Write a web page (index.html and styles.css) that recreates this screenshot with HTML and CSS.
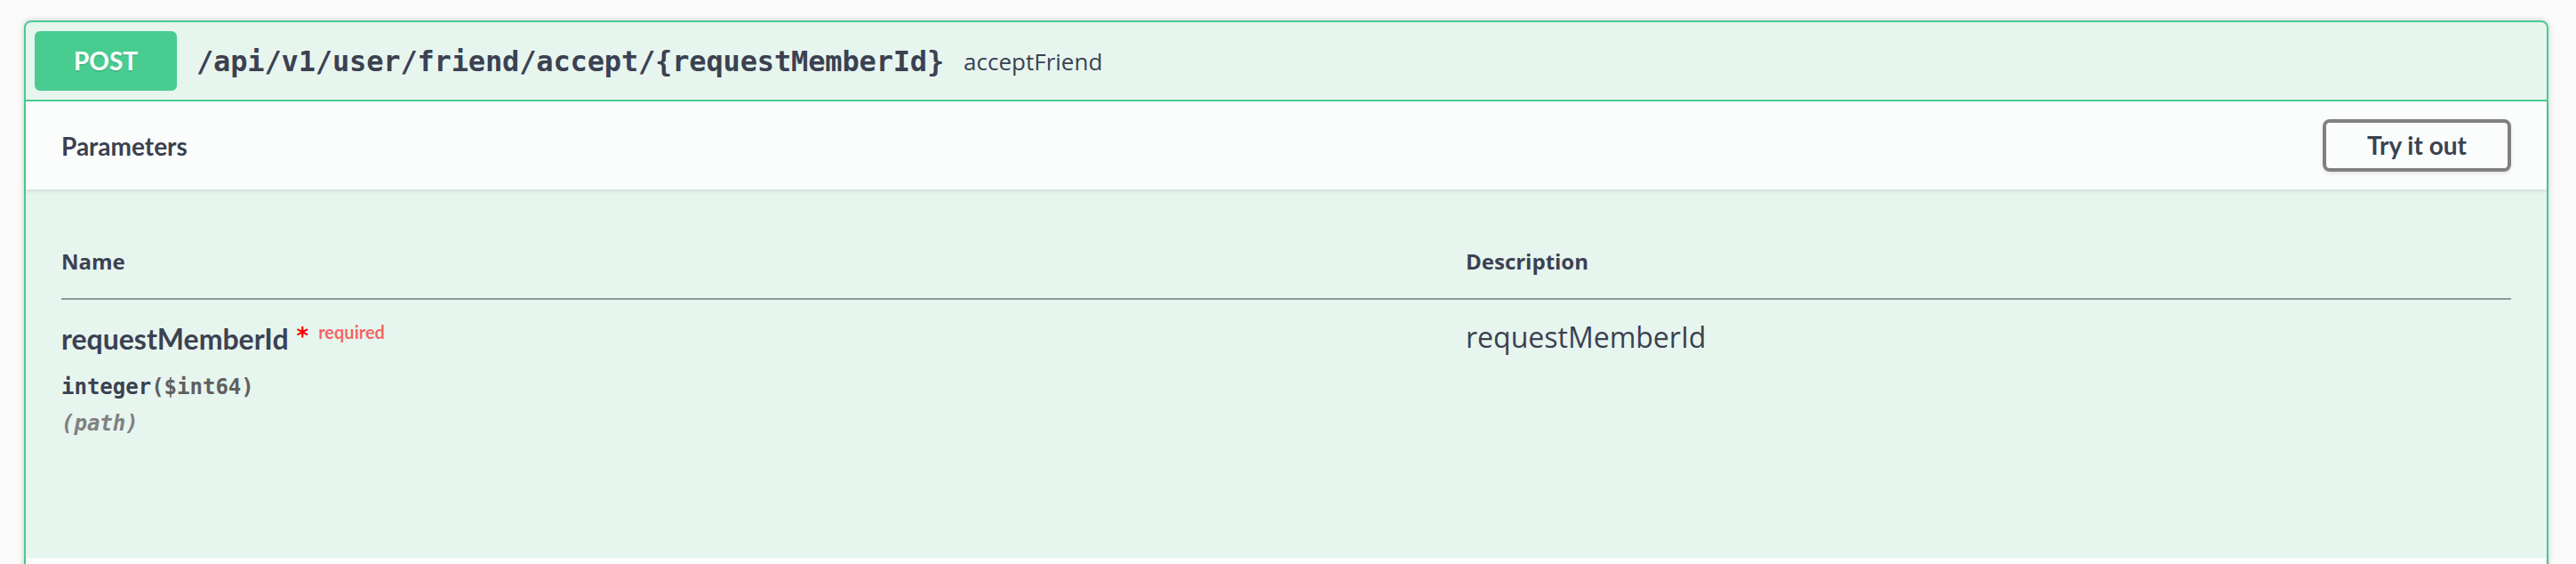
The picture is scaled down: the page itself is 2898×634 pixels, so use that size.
FILE: index.html
```html
<!DOCTYPE html>
<html lang="en">
<head>
<meta charset="utf-8">
<title>POST /api/v1/user/friend/accept/{requestMemberId}</title>
<link rel="stylesheet" href="styles.css">
</head>
<body>
<div class="page">
  <div class="opblock">
    <div class="summary">
      <span class="method">POST</span>
      <span class="path">/api/v1/user/friend/accept/{requestMemberId}</span>
      <span class="summary-desc">acceptFriend</span>
    </div>
    <div class="section-header">
      <h4 class="section-title">Parameters</h4>
      <button class="try-out">Try it out</button>
    </div>
    <div class="table-container">
      <table class="parameters">
        <thead>
          <tr>
            <th class="col-name">Name</th>
            <th class="col-desc">Description</th>
          </tr>
        </thead>
        <tbody>
          <tr>
            <td class="col-name">
              <div class="param-name">requestMemberId<span class="star">*</span><span class="required">required</span></div>
              <div class="param-type">integer<span class="format">($int64)</span></div>
              <div class="param-in">(path)</div>
            </td>
            <td class="col-desc">
              <p class="param-desc">requestMemberId</p>
            </td>
          </tr>
        </tbody>
      </table>
    </div>
    <div class="section-header section-next"></div>
  </div>
</div>
</body>
</html>
```

FILE: styles.css
```css
html, body {
  margin: 0;
  padding: 0;
  background: #fafafa;
}

.page {
  padding: 23px 0 0 27px;
}

.opblock {
  width: 2840px;
  box-sizing: border-box;
  border: 2px solid #49cc90;
  border-radius: 8px;
  background: rgba(73, 204, 144, 0.1);
  box-shadow: 0 0 6px rgba(0, 0, 0, 0.19);
}

.summary {
  display: flex;
  align-items: center;
  padding: 10px;
  border-bottom: 2px solid #49cc90;
}

.method {
  min-width: 160px;
  padding: 12px 0;
  line-height: 43px;
  text-align: center;
  border-radius: 6px;
  background: #49cc90;
  color: #fff;
  font-family: Lato, "Liberation Sans", sans-serif;
  font-weight: 700;
  font-size: 28px;
  text-shadow: 0 2px 0 rgba(0, 0, 0, 0.1);
}

.path {
  padding: 0 22px 0 22px;
  font-family: "DejaVu Sans Mono", "Liberation Mono", monospace;
  font-weight: 600;
  font-size: 32px;
  color: #3b4151;
  letter-spacing: -0.15px;
}

.summary-desc {
  font-family: "Open Sans", sans-serif;
  font-size: 26px;
  color: #3b4151;
}

.section-header {
  display: flex;
  align-items: center;
  min-height: 99px;
  box-sizing: border-box;
  padding: 16px 40px;
  background: rgba(255, 255, 255, 0.8);
  box-shadow: 0 2px 4px rgba(0, 0, 0, 0.1);
}

.section-title {
  flex: 1;
  margin: 0;
  font-family: Lato, "Liberation Sans", sans-serif;
  font-weight: 700;
  font-size: 28px;
  color: #3b4151;
}

.try-out {
  padding: 10px 46px;
  border: 4px solid #808080;
  border-radius: 8px;
  background: transparent;
  box-shadow: 0 2px 4px rgba(0, 0, 0, 0.1);
  font-family: Lato, "Liberation Sans", sans-serif;
  font-weight: 700;
  font-size: 28px;
  line-height: 31px;
  color: #3b4151;
}

.table-container {
  height: 414px;
  box-sizing: border-box;
  padding: 40px;
}

.parameters {
  width: 100%;
  border-collapse: collapse;
  table-layout: fixed;
}

.parameters th {
  padding: 24px 0;
  text-align: left;
  font-family: "Open Sans", sans-serif;
  font-weight: 700;
  font-size: 24px;
  line-height: 34px;
  color: #3b4151;
  border-bottom: 2px solid rgba(59, 65, 81, 0.3);
}

.parameters th.col-name {
  width: 1580px;
}

.parameters td {
  padding: 20px 0;
  vertical-align: top;
}

.param-name {
  font-family: Lato, "Liberation Sans", sans-serif;
  font-weight: 700;
  font-size: 32px;
  line-height: 48px;
  color: #3b4151;
}

.star {
  position: relative;
  top: -6px;
  margin-left: 9px;
  color: #ff0000;
  font-family: "DejaVu Sans", sans-serif;
  font-weight: 700;
  font-size: 26px;
}

.required {
  position: relative;
  top: -12px;
  margin-left: 11px;
  font-weight: 700;
  font-size: 20px;
  color: rgba(255, 0, 0, 0.6);
}

.param-type {
  padding: 10px 0;
  font-family: "DejaVu Sans Mono", "Liberation Mono", monospace;
  font-weight: 600;
  font-size: 24px;
  line-height: 32px;
  color: #3b4151;
}

.format {
  color: #606060;
}

.param-in {
  font-family: "DejaVu Sans Mono", "Liberation Mono", monospace;
  font-style: italic;
  font-weight: 600;
  font-size: 24px;
  line-height: 30px;
  color: #808080;
}

.param-desc {
  margin: 0;
  font-family: "Open Sans", sans-serif;
  font-size: 32px;
  color: #3b4151;
}
```
